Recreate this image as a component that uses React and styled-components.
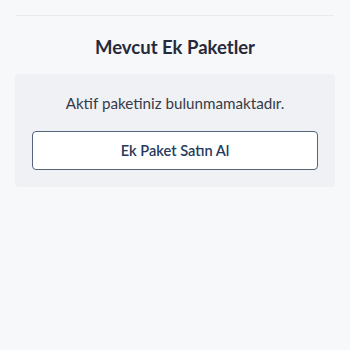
import React from 'react';
import styled, { createGlobalStyle } from 'styled-components';

const GlobalStyle = createGlobalStyle`
  html, body {
    margin: 0;
    padding: 0;
    background: #f7f8fa;
  }
  body {
    font-family: Lato, "Noto Sans", "Liberation Sans", sans-serif;
  }
`;

const Page = styled.div`
  width: 350px;
  min-height: 350px;
  box-sizing: border-box;
  padding: 15px 15px 0;
  background: #f7f8fa;
`;

const Divider = styled.hr`
  margin: 0 1px;
  border: none;
  border-top: 1px solid #e8eaee;
`;

const Title = styled.h2`
  margin: 19px 0 0;
  text-align: center;
  font-size: 18.5px;
  font-weight: 700;
  color: #262a3b;
  line-height: 24px;
`;

const Card = styled.div`
  margin-top: 15px;
  background: #eff1f4;
  border-radius: 4px;
  padding: 18px 17px 17px;
  display: flex;
  flex-direction: column;
  align-items: stretch;
  gap: 17px;
`;

const Message = styled.p`
  margin: 0;
  text-align: center;
  font-size: 15.2px;
  color: #363a48;
  line-height: 22px;
`;

const BuyButton = styled.button`
  height: 39px;
  background: #ffffff;
  border: 1px solid #56647e;
  border-radius: 4px;
  font-family: inherit;
  font-size: 14.6px;
  font-weight: 600;
  color: #253a5c;
  cursor: pointer;
`;

export default function App() {
  return (
    <>
      <GlobalStyle />
      <Page>
        <Divider />
        <Title>Mevcut Ek Paketler</Title>
        <Card>
          <Message>Aktif paketiniz bulunmamaktadır.</Message>
          <BuyButton>Ek Paket Satın Al</BuyButton>
        </Card>
      </Page>
    </>
  );
}
